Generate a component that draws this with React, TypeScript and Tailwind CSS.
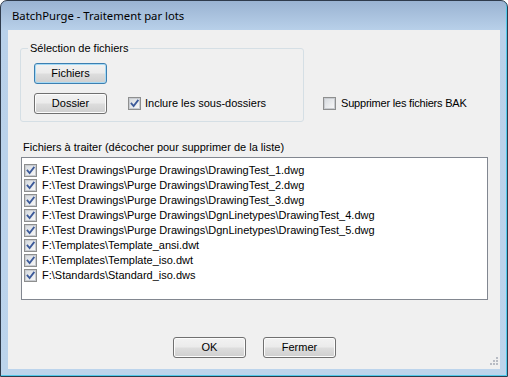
import React from 'react';

const files = [
  'F:\\Test Drawings\\Purge Drawings\\DrawingTest_1.dwg',
  'F:\\Test Drawings\\Purge Drawings\\DrawingTest_2.dwg',
  'F:\\Test Drawings\\Purge Drawings\\DrawingTest_3.dwg',
  'F:\\Test Drawings\\Purge Drawings\\DgnLinetypes\\DrawingTest_4.dwg',
  'F:\\Test Drawings\\Purge Drawings\\DgnLinetypes\\DrawingTest_5.dwg',
  'F:\\Templates\\Template_ansi.dwt',
  'F:\\Templates\\Template_iso.dwt',
  'F:\\Standards\\Standard_iso.dws',
];

const CheckBox: React.FC<{ checked?: boolean }> = ({ checked }) => (
  <span className="flex h-[13px] w-[13px] shrink-0 items-center justify-center border border-[#8e8f8f] bg-white">
    <span className="relative flex h-[11px] w-[11px] items-center justify-center border border-[#c9ccd1] bg-gradient-to-br from-[#d8dce0] to-[#f7f7f7]">
      {checked && (
        <svg width="11" height="11" viewBox="0 0 11 11" className="absolute -left-px -top-px">
          <path d="M2.5 5.5 L4.6 8 L8.8 2.6" fill="none" stroke="#3c5a9a" strokeWidth="1.8" strokeLinecap="square" />
        </svg>
      )}
    </span>
  </span>
);

const Button: React.FC<{ label: string; focused?: boolean }> = ({ label, focused }) => (
  <div
    className={`flex h-[21px] w-[73px] items-center justify-center rounded-[3px] border ${
      focused ? 'border-[#3c7fb1] shadow-[inset_0_0_0_1px_#a6daf5]' : 'border-[#707070] shadow-[inset_0_0_0_1px_#fcfcfc]'
    } bg-[linear-gradient(#f2f2f2_0%,#ebebeb_48%,#dddddd_52%,#cfcfcf_100%)] text-[11px] text-black`}
  >
    {label}
  </div>
);

export default function App() {
  return (
    <div className="h-[377px] w-[508px] bg-white font-['Liberation_Sans',Arial,sans-serif]">
      <div className="flex h-full w-full flex-col rounded-t-[7px] border border-[#2f3b4c] bg-[linear-gradient(#9ab3d2_0px,#b9d1ea_30px,#bcd4ec_100%)] px-[7px] pb-[7px] shadow-[inset_-1px_-1px_0_#52c9ea]">
        {/* Title bar */}
        <div className="flex h-[29px] shrink-0 items-center pl-[4px] pt-[2px] font-['Noto_Sans',sans-serif] text-[11.3px] text-black">
          BatchPurge - Traitement par lots
        </div>

        {/* Client area */}
        <div className="relative flex-1 bg-[#f0f0f0] text-[11px] text-black">
          <div className="flex items-start">
            <div className="relative ml-[12px] mt-[18px] h-[74px] w-[284px] rounded-[3px] border border-[#d5dfe5] pl-[13px] pt-[14px]">
              <span className="absolute -top-[7px] left-[7px] bg-[#f0f0f0] px-[2px] leading-[13px]">
                Sélection de fichiers
              </span>
              <Button label="Fichiers" focused />
              <div className="mt-[9px] flex items-center">
                <Button label="Dossier" />
                <div className="ml-[21px] flex items-center gap-[4px]">
                  <CheckBox checked />
                  <span>Inclure les sous-dossiers</span>
                </div>
              </div>
            </div>
            <div className="ml-[19px] mt-[67px] flex items-center gap-[5px] leading-[13px]">
              <CheckBox />
              <span className="tracking-[-0.2px]">Supprimer les fichiers BAK</span>
            </div>
          </div>

          <div className="ml-[15px] mt-[19px] h-[13px] leading-[13px]">
            Fichiers à traiter (décocher pour supprimer de la liste)
          </div>

          <div className="ml-[13px] mt-[3px] h-[143px] w-[467px] border border-[#828790] bg-white pl-[1px] pt-[5px]">
            {files.map((f) => (
              <div key={f} className="flex h-[15px] items-center gap-[5px] pl-[1px]">
                <CheckBox checked />
                <span className="whitespace-nowrap leading-[15px]">{f}</span>
              </div>
            ))}
          </div>

          <div className="ml-[165px] mt-[37px] flex gap-[17px]">
            <Button label="OK" />
            <Button label="Fermer" />
          </div>

          <svg width="10" height="10" viewBox="0 0 10 10" className="absolute bottom-[2px] right-[2px]">
            {[
              [8, 0],
              [8, 3],
              [5, 3],
              [8, 6],
              [5, 6],
              [2, 6],
            ].map(([x, y]) => (
              <rect key={`${x}-${y}`} x={x} y={y} width="2" height="2" fill="#b8bcc4" />
            ))}
          </svg>
        </div>
      </div>
    </div>
  );
}
